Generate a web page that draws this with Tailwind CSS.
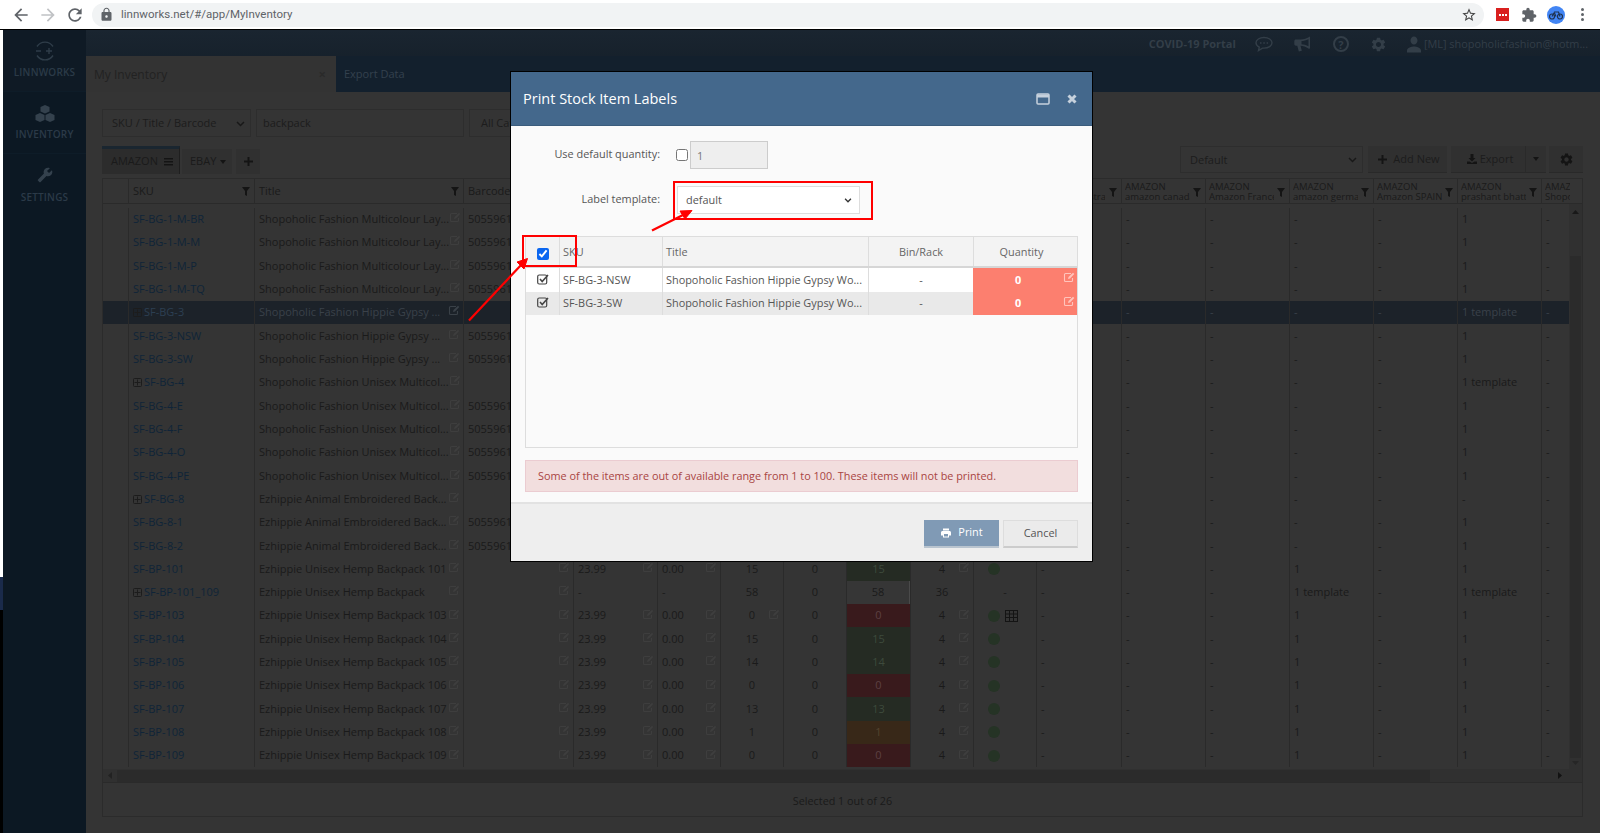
<!DOCTYPE html>
<html lang="en">
<head>
    <meta charset="UTF-8">
    <title>My Inventory</title>
    <script src="https://cdn.jsdelivr.net/npm/@tailwindcss/browser@4"></script>
</head>
<body class="bg-white font-['Open_Sans',sans-serif] overflow-hidden">
<div class="relative flex flex-col w-[1600px] h-[833px] overflow-hidden">

    <!-- Browser chrome -->
    <div class="h-[30px] shrink-0 bg-white border-b border-black flex items-center pl-[11px]">
        <svg class="w-[20px] h-[20px] text-[#5f6368]" viewBox="0 0 24 24" fill="currentColor"><path d="M20 11H7.830l5.590-5.590L12 4l-8 8 8 8 1.410-1.410L7.830 13H20v-2z"/></svg>
        <svg class="w-[20px] h-[20px] ml-[7px] text-[#c0c2c5]" viewBox="0 0 24 24" fill="currentColor"><path d="M12 4l-1.410 1.410L16.170 11H4v2h12.170l-5.580 5.590L12 20l8-8z"/></svg>
        <svg class="w-[20px] h-[20px] ml-[7px] text-[#5f6368]" viewBox="0 0 24 24" fill="currentColor"><path d="M17.650 6.350C16.200 4.900 14.210 4 12 4c-4.420 0-7.990 3.580-7.990 8s3.570 8 7.990 8c3.730 0 6.840-2.550 7.730-6h-2.080c-.82 2.330-3.040 4-5.650 4-3.310 0-6-2.690-6-6s2.690-6 6-6c1.660 0 3.140.69 4.220 1.780L13 11h7V4l-2.350 2.350z"/></svg>
        <div class="ml-[7px] w-[1392px] h-[24px] rounded-full bg-[#f1f3f4] flex items-center pl-[7px] pr-[7px]">
            <svg class="w-[15px] h-[15px] text-[#5f6368]" viewBox="0 0 24 24" fill="currentColor"><path d="M18 8h-1V6c0-2.760-2.240-5-5-5S7 3.240 7 6v2H6c-1.100 0-2 .9-2 2v10c0 1.100.9 2 2 2h12c1.100 0 2-.9 2-2V10c0-1.100-.9-2-2-2zm-6 9c-1.100 0-2-.9-2-2s.9-2 2-2 2 .9 2 2-.9 2-2 2zm3.100-9H8.900V6c0-1.710 1.390-3.100 3.100-3.100 1.710 0 3.100 1.390 3.100 3.100v2z"/></svg>
            <span class="ml-[7px] text-[11.500px] text-[#5f6368] font-['Roboto',sans-serif]">linnworks.net/#/app/MyInventory</span>
            <svg class="ml-auto w-[16px] h-[16px] text-[#444]" viewBox="0 0 24 24" fill="currentColor"><path d="M22 9.240l-7.190-.62L12 2 9.190 8.630 2 9.240l5.460 4.730L5.820 21 12 17.270 18.180 21l-1.630-7.030L22 9.240zM12 15.400l-3.760 2.270 1-4.280-3.320-2.880 4.380-.38L12 6.100l1.710 4.040 4.380.38-3.320 2.880 1 4.280L12 15.400z"/></svg>
        </div>
        <div class="ml-[12px] w-[13px] h-[13px] bg-[#d9201f] flex items-center justify-center gap-[1px]">
            <i class="w-[2px] h-[2px] bg-white"></i><i class="w-[2px] h-[2px] bg-white"></i><i class="w-[2px] h-[2px] bg-white"></i>
        </div>
        <svg class="ml-[12px] w-[16px] h-[16px] text-[#5f6368]" viewBox="0 0 24 24" fill="currentColor"><path d="M20.500 11H19V7c0-1.100-.9-2-2-2h-4V3.500C13 2.120 11.880 1 10.500 1S8 2.120 8 3.500V5H4c-1.100 0-1.990.9-1.990 2v3.800H3.500c1.490 0 2.700 1.210 2.700 2.700s-1.210 2.700-2.700 2.700H2V20c0 1.100.9 2 2 2h3.800v-1.500c0-1.490 1.210-2.700 2.700-2.700 1.490 0 2.700 1.210 2.700 2.700V22H17c1.100 0 2-.9 2-2v-4h1.500c1.380 0 2.500-1.120 2.500-2.500S21.880 11 20.500 11z"/></svg>
        <div class="ml-[10px] w-[18px] h-[18px] rounded-full bg-[#4285f4] flex items-center justify-center">
            <svg class="w-[14px] h-[10px]" viewBox="0 0 14 10" fill="none" stroke="#1f3350" stroke-width="1.200"><circle cx="3" cy="6.500" r="2.500"/><circle cx="11" cy="6.500" r="2.500"/><path d="M3 6.500 5.500 2h4L11 6.500M7 6.500 5 2"/></svg>
        </div>
        <div class="ml-[16px] flex flex-col gap-[2px]">
            <i class="w-[3px] h-[3px] rounded-full bg-[#5f6368]"></i><i class="w-[3px] h-[3px] rounded-full bg-[#5f6368]"></i><i class="w-[3px] h-[3px] rounded-full bg-[#5f6368]"></i>
        </div>
    </div>

    <div class="flex flex-1 min-h-0">
        <!-- leftover strip of the window behind -->
        <div class="w-[3px] shrink-0 flex flex-col">
            <div class="h-[547px] bg-white"></div>
            <div class="h-[33px] bg-[#1a2a4a]"></div>
            <div class="flex-1 bg-black"></div>
        </div>

        <!-- Sidebar -->
        <div class="w-[83px] shrink-0 bg-[#0c1823] flex flex-col text-[#2b3a48] text-[10px] font-semibold">
            <div class="h-[62px] flex flex-col items-center pt-[10px] bg-[#0f1a25] border-b border-[#0e1c28]">
                <svg class="w-[22px] h-[22px] text-[#2f3d49]" viewBox="0 0 22 22" fill="none" stroke="currentColor" stroke-width="1.400"><path d="M3 6.500A9.500 9.500 0 0 1 19 6.500M3 15.500A9.500 9.500 0 0 0 19 15.500M2 11h5M12 11h6M15 8v6"/></svg>
                <span class="mt-[3px] tracking-[0.2px] leading-[14px]">LINNWORKS</span>
            </div>
            <div class="h-[62px] flex flex-col items-center pt-[13px] border-b border-[#0e1c28]">
                <svg class="w-[20px] h-[18px] text-[#34414d]" viewBox="0 0 20 18" fill="currentColor"><path d="M10 0 14.500 2v4.500L10 8.500 5.500 6.500V2zM5 8l4.500 2v5L5 17 .5 15v-5zM15 8l4.500 2v5L15 17l-4.500-2v-5z"/></svg>
                <span class="mt-[4px] tracking-[0.2px] leading-[14px]">INVENTORY</span>
            </div>
            <div class="h-[62px] flex flex-col items-center pt-[13px]">
                <svg class="w-[16px] h-[16px] text-[#34414d] -scale-x-100" viewBox="0 0 24 24" fill="currentColor"><path d="M22.700 19l-9.100-9.100c.9-2.300.4-5-1.500-6.900-2-2-5-2.400-7.400-1.300L9 6 6 9 1.600 4.700C.4 7.100.9 10.100 2.900 12.100c1.900 1.900 4.600 2.400 6.900 1.500l9.100 9.100c.4.400 1 .4 1.400 0l2.300-2.300c.5-.4.5-1.100.1-1.400z"/></svg>
                <span class="mt-[7px] tracking-[0.2px] leading-[14px]">SETTINGS</span>
            </div>
        </div>

        <!-- Main -->
        <div class="flex-1 min-w-0 flex flex-col bg-[#343434]">
            <!-- Top bar -->
            <div class="h-[62px] shrink-0 bg-linear-to-b from-[#1a2530] to-[#121c26] flex flex-col">
                <div class="h-[26px] flex items-center justify-end pr-[12px] text-[#333e48] pt-[2px]">
                    <span class="text-[11px] font-bold">COVID-19 Portal</span>
                    <svg class="ml-[19px] w-[18px] h-[16px]" viewBox="0 0 18 16" fill="none" stroke="currentColor" stroke-width="1.400"><path d="M9 1.500C4.600 1.500 1 3.800 1 6.800c0 1.800 1.300 3.400 3.300 4.300L3.500 14.500l4-2.400H9c4.400 0 8-2.300 8-5.300s-3.600-5.300-8-5.300z"/><path d="M5 7h1.500M8.300 7h1.500M11.600 7h1.500"/></svg>
                    <svg class="ml-[21px] w-[18px] h-[16px]" viewBox="0 0 18 16" fill="currentColor"><path d="M16 .5v12l-1.200.3C12 10.500 9 9.800 6.500 9.700l1.300 5-3 .8L3.300 9.700H2C1 9.700.3 9 .3 8V5.200C.3 4.200 1 3.500 2 3.500h4.500C9.500 3.500 13 2.500 16 .5zM14.500 3.300C12 4.600 9.500 5 7.500 5.100v3.200c2 .1 4.800.7 7 2z"/></svg>
                    <div class="ml-[21px] w-[16px] h-[16px] rounded-full border-2 border-current flex items-center justify-center text-[11px] font-bold leading-none">?</div>
                    <svg class="ml-[21px] w-[17px] h-[17px]" viewBox="0 0 24 24" fill="currentColor"><path d="M19.140 12.940c.04-.3.06-.61.06-.94 0-.32-.02-.64-.07-.94l2.030-1.580c.18-.14.23-.41.12-.61l-1.920-3.320c-.12-.22-.37-.29-.59-.22l-2.390.96c-.5-.38-1.030-.7-1.620-.94l-.36-2.540c-.04-.24-.24-.41-.48-.41h-3.840c-.24 0-.43.17-.47.41l-.36 2.540c-.59.24-1.130.57-1.620.94l-2.390-.96c-.22-.08-.47 0-.59.22L2.740 8.870c-.12.21-.08.47.12.61l2.030 1.580c-.05.3-.09.63-.09.94s.02.64.07.94l-2.030 1.580c-.18.14-.23.41-.12.61l1.920 3.320c.12.22.37.29.59.22l2.390-.96c.5.38 1.030.7 1.620.94l.36 2.540c.05.24.24.41.48.41h3.840c.24 0 .44-.17.47-.41l.36-2.540c.59-.24 1.130-.56 1.620-.94l2.390.96c.22.08.47 0 .59-.22l1.920-3.320c.12-.22.07-.47-.12-.61l-2.010-1.580zM12 15.600c-1.980 0-3.600-1.620-3.600-3.600s1.620-3.600 3.600-3.600 3.600 1.620 3.600 3.600-1.620 3.600-3.600 3.600z"/></svg>
                    <svg class="ml-[20px] w-[14px] h-[17px]" viewBox="4 3.500 16 17" preserveAspectRatio="none" fill="currentColor"><path d="M12 12c2.210 0 4-1.790 4-4s-1.790-4-4-4-4 1.790-4 4 1.790 4 4 4zm0 2c-2.670 0-8 1.340-8 4v2h16v-2c0-2.660-5.330-4-8-4z"/></svg>
                    <span class="ml-[3px] text-[10.900px] whitespace-nowrap">[ML] shopoholicfashion@hotm...</span>
                </div>
                <div class="flex-1 flex text-[11px]">
                    <div class="w-[250px] bg-[#333333] flex items-center justify-between pl-[8px] pr-[10px] pt-[1px] text-[#222] text-[12px]">
                        <span>My Inventory</span><span class="text-[#2a2a2a] font-bold text-[13px]">×</span>
                    </div>
                    <div class="flex-1 bg-[#13202d] flex items-center pl-[8px] text-[#33414e]">Export Data</div>
                </div>
            </div>

            <!-- Content -->
            <div class="flex-1 min-h-0 flex flex-col pl-[16px] pr-[17px] pt-[17px] text-[11px] text-[#1a1a1a]">
                <!-- Filter row -->
                <div class="flex gap-[5px] h-[28px] shrink-0">
                    <div class="w-[149px] border border-[#2d2d2d] flex items-center justify-between pl-[9px] pr-[5px] pt-[1px]">
                        <span class="text-[#1c1c1c]">SKU / Title / Barcode</span>
                        <svg class="w-[9px] h-[6px]" viewBox="0 0 9 6" fill="none" stroke="#181818" stroke-width="1.500"><path d="M1 1l3.500 3.500L8 1"/></svg>
                    </div>
                    <div class="w-[208px] border border-[#2d2d2d] flex items-center pl-[6px] pt-[1px] text-[#1c1c1c]">backpack</div>
                    <div class="w-[120px] border border-[#2d2d2d] flex items-center pl-[11px] pt-[1px] text-[#1c1c1c]">All Categories</div>
                </div>

                <!-- Views row -->
                <div class="flex h-[32px] mt-[9px] shrink-0">
                    <div class="w-[78px] h-[28px] bg-[#2c2c2c] border-t-[3px] border-[#1a2630] border-r border-r-[#1f1f1f] flex items-center pl-[9px] text-[#1a1a1a]">
                        AMAZON
                        <svg class="ml-[6px] w-[9px] h-[8px]" viewBox="0 0 9 8" fill="#141414"><path d="M0 0h9v1.500H0zM0 3h9v1.500H0zM0 6h9v1.500H0z"/></svg>
                    </div>
                    <div class="ml-[2px] mt-[3px] w-[50px] h-[25px] flex items-center pl-[8px] bg-[#303030]">
                        EBAY
                        <svg class="ml-[4px] w-[6px] h-[4px]" viewBox="0 0 6 4" fill="#141414"><path d="M0 0h6L3 4z"/></svg>
                    </div>
                    <div class="ml-[4px] mt-[3px] w-[24px] h-[25px] flex items-center justify-center bg-[#303030]">
                        <svg class="w-[9px] h-[9px]" viewBox="0 0 9 9" fill="#141414"><path d="M3.500 0h2v3.500H9v2H5.500V9h-2V5.500H0v-2h3.500z"/></svg>
                    </div>
                    <div class="ml-auto w-[183px] h-[27px] border border-[#2d2d2d] flex items-center justify-between pl-[9px] pr-[5px] pt-[1px] text-[#1c1c1c]">
                        Default
                        <svg class="w-[9px] h-[6px]" viewBox="0 0 9 6" fill="none" stroke="#181818" stroke-width="1.500"><path d="M1 1l3.500 3.500L8 1"/></svg>
                    </div>
                    <div class="ml-[5px] w-[79px] h-[27px] bg-[#303030] border-b border-[#292929] flex items-center justify-center gap-[6px] pl-[3px] text-[#1c1c1c]">
                        <svg class="w-[9px] h-[9px]" viewBox="0 0 9 9" fill="#141414"><path d="M3.500 0h2v3.500H9v2H5.500V9h-2V5.500H0v-2h3.500z"/></svg>
                        Add New
                    </div>
                    <div class="ml-[4px] w-[74px] h-[27px] bg-[#303030] border-b border-[#292929] flex items-center justify-center gap-[3px] pl-[4px] text-[#1c1c1c]">
                        <svg class="w-[10px] h-[10px]" viewBox="0 0 10 10" fill="#141414"><path d="M3.500 0h3v4h2L5 7.500 1.500 4h2zM0 7.500h2.500L5 9l2.500-1.500H10V10H0z"/></svg>
                        Export
                    </div>
                    <div class="w-[21px] h-[27px] bg-[#303030] border-l border-[#2a2a2a] border-b border-b-[#292929] flex items-center justify-center">
                        <svg class="w-[6px] h-[4px]" viewBox="0 0 6 4" fill="#141414"><path d="M0 0h6L3 4z"/></svg>
                    </div>
                    <div class="ml-[3px] w-[34px] h-[27px] bg-[#303030] border-b border-[#292929] flex items-center justify-center">
                        <svg class="w-[15px] h-[15px]" viewBox="0 0 24 24" fill="#141414"><path d="M19.140 12.940c.04-.3.06-.61.06-.94 0-.32-.02-.64-.07-.94l2.030-1.580c.18-.14.23-.41.12-.61l-1.920-3.320c-.12-.22-.37-.29-.59-.22l-2.390.96c-.5-.38-1.030-.7-1.620-.94l-.36-2.540c-.04-.24-.24-.41-.48-.41h-3.840c-.24 0-.43.17-.47.41l-.36 2.540c-.59.24-1.130.57-1.620.94l-2.390-.96c-.22-.08-.47 0-.59.22L2.740 8.870c-.12.21-.08.47.12.61l2.030 1.580c-.05.3-.09.63-.09.94s.02.64.07.94l-2.030 1.580c-.18.14-.23.41-.12.61l1.920 3.320c.12.22.37.29.59.22l2.390-.96c.5.38 1.030.7 1.620.94l.36 2.540c.05.24.24.41.48.41h3.840c.24 0 .44-.17.47-.41l.36-2.540c.59-.24 1.130-.56 1.620-.94l2.390.96c.22.08.47 0 .59-.22l1.920-3.320c.12-.22.07-.47-.12-.61l-2.010-1.580zM12 15.600c-1.980 0-3.600-1.620-3.600-3.600s1.620-3.600 3.600-3.600 3.600 1.620 3.600 3.600-1.620 3.600-3.600 3.600z"/></svg>
                    </div>
                </div>

                <!-- Grid -->
                <div class="w-[1481px] h-[639px] shrink-0 border border-[#2b2b2b] flex flex-col">
                    <div id="gridHead" class="h-[25px] shrink-0 border-b border-[#2a2a2a] grid grid-cols-[25px_126px_209px_110px_84px_63px_63px_63px_64px_63px_63px_85px_84px_84px_84px_84px_84px_29px] overflow-hidden"></div>
                    <div class="relative h-[565px] shrink-0 pt-[3.500px] overflow-hidden">
                        <div id="gridBody" class="w-[1468px] overflow-hidden"></div>
                        <!-- vertical scrollbar -->
                        <div class="absolute right-0 top-0 bottom-0 w-[13px] bg-[#303030] flex flex-col items-center">
                            <svg class="mt-[6px] w-[7px] h-[4px]" viewBox="0 0 7 4" fill="#181818"><path d="M0 4h7L3.500 0z"/></svg>
                            <div class="mt-[42px] w-[11px] h-[502px] bg-[#2b2b2b]"></div>
                            <svg class="mt-[3px] w-[7px] h-[4px]" viewBox="0 0 7 4" fill="#262626"><path d="M0 0h7L3.500 4z"/></svg>
                        </div>
                    </div>
                    <!-- horizontal scrollbar -->
                    <div class="h-[14px] shrink-0 bg-[#303030] border-b border-[#2a2a2a] flex items-center pl-[5px]">
                        <svg class="w-[4px] h-[7px]" viewBox="0 0 4 7" fill="#222"><path d="M4 0v7L0 3.500z"/></svg>
                        <div class="ml-[5px] w-[1313px] h-[12px] bg-[#2b2b2b]"></div>
                        <svg class="ml-[128px] w-[4px] h-[7px]" viewBox="0 0 4 7" fill="#121212"><path d="M0 0v7l4-3.500z"/></svg>
                    </div>
                    <div class="flex-1 flex items-center justify-center pt-[3px] text-[10.800px] text-[#1a1a1a]">Selected 1 out of 26</div>
                </div>
            </div>
        </div>
    </div>

    <!-- Modal -->
    <div class="absolute left-[510px] top-[71px] w-[583px] h-[491px] border border-black bg-[#fafafa] flex flex-col">
        <div class="h-[54px] shrink-0 bg-[#44688c] border-b border-[#3b5c7c] flex items-center pl-[12px] pr-[15px]">
            <span class="text-[14.500px] text-white">Print Stock Item Labels</span>
            <svg class="ml-auto w-[14px] h-[12px]" viewBox="0 0 14 12" fill="none" stroke="#c6d1dd"><rect x="1" y="1" width="12" height="10" rx="1" stroke-width="1.500"/><path d="M1 3h12" stroke-width="3"/></svg>
            <svg class="ml-[17px] w-[10px] h-[10px]" viewBox="0 0 10 10" fill="none" stroke="#c6d1dd" stroke-width="3"><path d="M1.500 1.500l7 7M8.500 1.500l-7 7"/></svg>
        </div>
        <div class="flex-1 min-h-0 flex flex-col px-[14px] pt-[15px] text-[10.900px] text-[#555]">
            <div class="flex items-center h-[28px] shrink-0">
                <label class="w-[135px] text-right pb-[2px]">Use default quantity:</label>
                <input type="checkbox" class="ml-[16px] w-[12px] h-[12px]">
                <input type="text" value="1" disabled class="ml-[2px] w-[78px] h-[28px] bg-[#eeeeee] border border-[#cccccc] pl-[6px] text-[#777]">
            </div>
            <div class="flex items-center h-[28px] mt-[17px] shrink-0">
                <label class="w-[135px] text-right pb-[2px]">Label template:</label>
                <div class="ml-[17px] w-[183px] h-[28px] bg-white border border-[#dddddd] flex items-center justify-between pl-[8px] pr-[7px] text-[#555]">
                    default
                    <svg class="w-[8px] h-[5px]" viewBox="0 0 9 6" fill="none" stroke="#333" stroke-width="1.600"><path d="M1 1l3.500 3.500L8 1"/></svg>
                </div>
            </div>
            <!-- Items table -->
            <div class="mt-[22px] h-[212px] shrink-0 border border-[#dddddd] flex flex-col">
                <div class="h-[31px] shrink-0 bg-[#f3f3f3] border-b-2 border-[#d6d6d6] grid grid-cols-[33px_103px_206px_105px_1fr] items-stretch text-[#666]">
                    <div class="flex items-center justify-center pt-[5px]"><input type="checkbox" checked class="w-[12px] h-[12px] accent-[#0a66f0]"></div>
                    <div class="border-l border-[#dddddd] flex items-center pl-[3px] pt-[2px]">SKU</div>
                    <div class="border-l border-[#dddddd] flex items-center pl-[3px] pt-[2px]">Title</div>
                    <div class="border-l border-[#dddddd] flex items-center justify-center pt-[2px]">Bin/Rack</div>
                    <div class="border-l border-[#dddddd] flex items-center justify-center pr-[8px] pt-[2px]">Quantity</div>
                </div>
                <div id="modalRows"></div>
            </div>
            <div class="mt-[12px] h-[32px] shrink-0 bg-[#f2dede] border border-[#ebccd1] text-[#a94442] text-[10.850px] flex items-center pl-[12px]">Some of the items are out of available range from 1 to 100. These items will not be printed.</div>
        </div>
        <div class="h-[59px] shrink-0 bg-[#eeeeee] border-t-2 border-[#e2e2e2] flex items-center justify-end gap-[4px] px-[14px] pt-[2px]">
            <div class="w-[75px] h-[28px] bg-[#809ab5] border-b-2 border-[#b9c4cf] flex items-center justify-center gap-[6px] text-white text-[10.900px]">
                <svg class="w-[12px] h-[12px]" viewBox="0 0 24 24" fill="currentColor"><path d="M19 8H5c-1.660 0-3 1.340-3 3v6h4v4h12v-4h4v-6c0-1.660-1.340-3-3-3zm-3 11H8v-5h8v5zM18 3H6v4h12z"/></svg>
                Print
            </div>
            <div class="w-[75px] h-[28px] bg-[#ebebeb] border border-[#dddddd] border-b-2 border-b-[#cccccc] flex items-center justify-center text-[#555] text-[10.900px]">Cancel</div>
        </div>
    </div>

    <!-- Red annotations drawn on the screenshot -->
    <div class="absolute left-[673px] top-[181px] w-[200px] h-[39px] border-2 border-[#ff0000]"></div>
    <div class="absolute left-[522px] top-[235px] w-[55px] h-[32px] border-2 border-[#ff0000]"></div>
    <svg class="absolute left-0 top-0 pointer-events-none" width="1600" height="833" fill="#ff0000" stroke="#ff0000">
        <path d="M469 320.500 522 264" stroke-width="2.200" fill="none"/>
        <path d="M527.500 258.500 524 269 517 262z"/>
        <path d="M652 230.500 683 215" stroke-width="2.200" fill="none"/>
        <path d="M692 210.500 685 219 680 211z"/>
    </svg>
</div>

<script>
    const editIcon = (color) => `<svg class="w-[12px] h-[11px] shrink-0 -mt-[3px]" viewBox="0 0 12 11" fill="none" stroke="${color}"><path d="M8 1.500H2.500a1 1 0 0 0-1 1v6a1 1 0 0 0 1 1h6a1 1 0 0 0 1-1V6" stroke-width="1.100"/><path d="M5 7l.5-2L10 .8l1.300 1.300L7 6.500z" fill="${color}" stroke="none"/></svg>`;
    const filterIcon = `<svg class="w-[8px] h-[9px] shrink-0" viewBox="0 0 8 9" fill="#141414"><path d="M0 0h8L5 4v5L3 8V4z"/></svg>`;
    const plusBox = `<svg class="w-[9px] h-[9px] shrink-0 mr-[2px]" viewBox="0 0 9 9" fill="none" stroke="#1c1c1c"><rect x=".5" y=".5" width="8" height="8" rx="1"/><path d="M4.500 1.500v6M1.500 4.500h6"/></svg>`;
    const tableIcon = `<svg class="w-[13px] h-[12px] ml-[5px]" viewBox="0 0 13 12" fill="none" stroke="#141414"><rect x=".5" y=".5" width="12" height="11"/><path d="M.5 4h12M.5 7.500h12M4.500.5v11M8.500.5v11"/></svg>`;

    const shop = 'Shopoholic Fashion ';
    const rows = [
        ['SF-BG-1-M-BR', shop + 'Multicolour Lay...', 1],
        ['SF-BG-1-M-M', shop + 'Multicolour Lay...', 1],
        ['SF-BG-1-M-P', shop + 'Multicolour Lay...', 1],
        ['SF-BG-1-M-TQ', shop + 'Multicolour Lay...', 1],
        ['SF-BG-3', shop + 'Hippie Gypsy ...', 0],
        ['SF-BG-3-NSW', shop + 'Hippie Gypsy ...', 1],
        ['SF-BG-3-SW', shop + 'Hippie Gypsy ...', 1],
        ['SF-BG-4', shop + 'Unisex Multicol...', 0],
        ['SF-BG-4-E', shop + 'Unisex Multicol...', 1],
        ['SF-BG-4-F', shop + 'Unisex Multicol...', 1],
        ['SF-BG-4-O', shop + 'Unisex Multicol...', 1],
        ['SF-BG-4-PE', shop + 'Unisex Multicol...', 1],
        ['SF-BG-8', 'Ezhippie Animal Embroidered Back...', 0],
        ['SF-BG-8-1', 'Ezhippie Animal Embroidered Back...', 1],
        ['SF-BG-8-2', 'Ezhippie Animal Embroidered Back...', 1],
        ['SF-BP-101', 'Ezhippie Unisex Hemp Backpack 101', 2, 15],
        ['SF-BP-101_109', 'Ezhippie Unisex Hemp Backpack', 3, 58],
        ['SF-BP-103', 'Ezhippie Unisex Hemp Backpack 103', 2, 0],
        ['SF-BP-104', 'Ezhippie Unisex Hemp Backpack 104', 2, 15],
        ['SF-BP-105', 'Ezhippie Unisex Hemp Backpack 105', 2, 14],
        ['SF-BP-106', 'Ezhippie Unisex Hemp Backpack 106', 2, 0],
        ['SF-BP-107', 'Ezhippie Unisex Hemp Backpack 107', 2, 13],
        ['SF-BP-108', 'Ezhippie Unisex Hemp Backpack 108', 2, 1],
        ['SF-BP-109', 'Ezhippie Unisex Hemp Backpack 109', 2, 0],
    ];

    // header
    const channels = ['amazon australia', 'amazon canada', 'Amazon France', 'amazon germany', 'Amazon SPAIN', 'prashant bhatta', 'Shopoholic'];
    let head = `<div></div>`;
    for (const name of ['SKU', 'Title']) {
        head += `<div class="border-l border-[#2a2a2a] flex items-center justify-between pl-[4px] pr-[4px] pt-[1px]"><span>${name}</span>${filterIcon}</div>`;
    }
    head += `<div class="border-l border-[#2a2a2a] flex items-center pl-[4px]">Barcode</div>`;
    for (let i = 0; i < 7; i++) head += `<div class="border-l border-[#2a2a2a]"></div>`;
    channels.forEach((name, i) => {
        head += `<div class="border-l border-[#2a2a2a] flex items-center pl-[3px] pr-[4px] pt-[2px] overflow-hidden"><div class="w-[65px] shrink-0 mr-auto overflow-hidden whitespace-nowrap leading-[10px] text-[9.500px]">AMAZON<br>${name}</div>${i < 6 ? filterIcon : ''}</div>`;
    });
    document.getElementById('gridHead').innerHTML = head;

    // body
    const cellBase = 'border-l border-[#2a2a2a] flex items-center overflow-hidden whitespace-nowrap';
    const stockCell = (n) => {
        if (n === 0) return 'bg-[#391a1c] text-[#5c4042]';
        if (n === 1) return 'bg-[#382818] text-[#54442f]';
        if (n === 58) return 'bg-[#363636] text-[#1a1a1a] border-r border-r-[#4a4a4a]';
        return 'bg-[#252b23] text-[#3d4a3c]';
    };
    let body = '';
    rows.forEach((row, i) => {
        const [sku, title, kind, stock = 15] = row;
        const group = kind === 0 || kind === 3;
        const selected = i === 4;
        const edit = editIcon(selected ? '#3a4148' : '#3e3e3e');
        const titleColor = selected ? 'text-[#3a4149]' : 'text-[#1a1a1a]';
        const skuColor = selected ? 'text-[#2c3f52]' : 'text-[#0f2438]';
        const dash = `<span class="${selected ? 'text-[#3a4149]' : ''}">-</span>`;
        const germany = i >= 15 ? (kind === 3 ? '1 template' : '1') : '-';
        const prashant = (kind === 3 || i === 4 || i === 7) ? '1 template' : (i === 12 ? '-' : '1');
        body += `<div class="h-[23.330px] grid grid-cols-[25px_126px_209px_110px_84px_63px_63px_63px_64px_63px_63px_85px_84px_84px_84px_84px_84px_16px] ${selected ? 'bg-[#1c2229]' : ''}">
            <div></div>
            <div class="${cellBase} pl-[4px] ${skuColor}">${group ? plusBox : ''}${sku}</div>
            <div class="${cellBase} justify-between pl-[4px] pr-[3px] ${titleColor}"><span>${title}</span>${edit}</div>
            <div class="${cellBase} justify-between pl-[4px] pr-[3px]"><span>${kind === 1 ? '5055961' : ''}</span>${edit}</div>
            <div class="${cellBase} justify-between pl-[4px] pr-[3px]"><span>${kind === 3 ? '-' : '23.99'}</span>${kind === 3 ? '' : edit}</div>
            <div class="${cellBase} justify-between pl-[4px] pr-[3px]"><span>${kind === 3 ? '-' : '0.00'}</span>${kind === 3 ? '' : edit}</div>
            <div class="${cellBase} relative justify-center">${stock}${i === 17 ? `<span class="absolute right-[3px]">${edit}</span>` : ''}</div>
            <div class="${cellBase} justify-center">0</div>
            <div class="${cellBase} justify-center ${stockCell(stock)}">${stock}</div>
            <div class="${cellBase} relative justify-center">${kind === 3 ? '36' : '4'}${kind === 3 ? '' : `<span class="absolute right-[3px]">${edit}</span>`}</div>
            <div class="${cellBase} ${kind === 3 ? 'justify-center' : 'pl-[14px]'}">${kind === 3 ? '-' : `<span class="block shrink-0 w-[12px] h-[12px] rounded-full bg-[#253325]"></span>`}${i === 17 ? tableIcon : ''}</div>
            <div class="${cellBase} pl-[4px]">${dash}</div>
            <div class="${cellBase} pl-[4px]">${dash}</div>
            <div class="${cellBase} pl-[4px]">${dash}</div>
            <div class="${cellBase} pl-[4px]">${germany === '-' ? dash : germany}</div>
            <div class="${cellBase} pl-[4px]">${dash}</div>
            <div class="${cellBase} pl-[4px] ${selected ? 'text-[#3a4149]' : ''}">${prashant}</div>
            <div class="${cellBase} pl-[4px]">${dash}</div>
        </div>`;
    });
    document.getElementById('gridBody').innerHTML = body;

    // modal rows
    const checkIcon = `<svg class="w-[12px] h-[11px]" viewBox="0 0 12 11" fill="none" stroke="#444"><rect x=".7" y="1" width="9" height="9" rx="1.500" stroke-width="1.200"/><path d="M3 5l2.200 2.500L11 1" stroke-width="1.600"/></svg>`;
    let modalRows = '';
    [['SF-BG-3-NSW', 'bg-white'], ['SF-BG-3-SW', 'bg-[#e9e9e9]']].forEach(([sku, bg]) => {
        modalRows += `<div class="h-[23.500px] grid grid-cols-[33px_103px_206px_105px_1fr] ${bg} text-[#555]">
            <div class="flex items-center justify-center -mt-[1px]">${checkIcon}</div>
            <div class="border-l border-[#dddddd] flex items-center pl-[3px]">${sku}</div>
            <div class="border-l border-[#dddddd] flex items-center pl-[3px] whitespace-nowrap overflow-hidden">Shopoholic Fashion Hippie Gypsy Wo...</div>
            <div class="border-l border-[#dddddd] flex items-center justify-center">-</div>
            <div class="relative bg-[#fc7f6f] flex items-center justify-center text-white font-bold pr-[14px]">0<span class="absolute right-[2px] top-[7px]">${editIcon('#ffc4bc')}</span></div>
        </div>`;
    });
    document.getElementById('modalRows').innerHTML = modalRows;
</script>
</body>
</html>
